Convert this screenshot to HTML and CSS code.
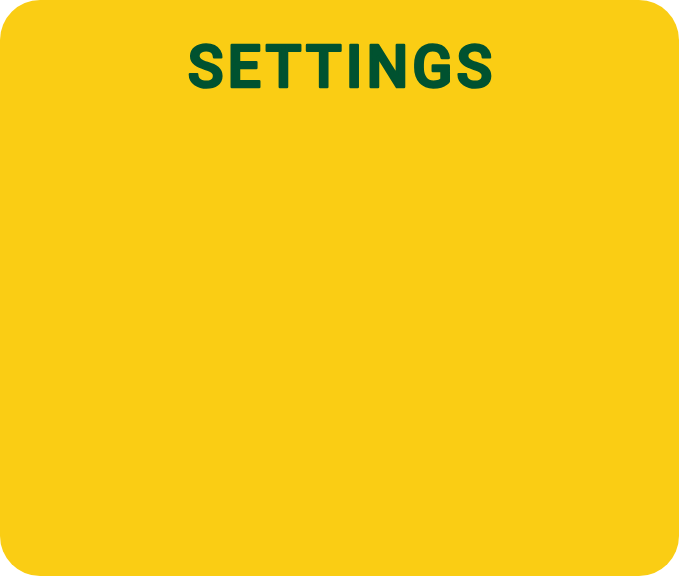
FILE: index.html
```html
<!DOCTYPE html>
<html lang="en">
<head>
<meta charset="utf-8">
<title>Settings</title>
<link rel="stylesheet" href="styles.css">
</head>
<body>
<main class="panel">
  <h1 class="panel-title">
    <svg class="title-svg" width="679" height="100" viewBox="0 0 679 100" role="img" aria-label="SETTINGS">
      <text class="title-text" x="342" y="87" text-anchor="middle">SETTINGS</text>
    </svg>
  </h1>
</main>
</body>
</html>
```
FILE: styles.css
```css
html, body {
  margin: 0;
  padding: 0;
  background: #ffffff;
  height: 100%;
}
.panel {
  box-sizing: border-box;
  width: 679px;
  height: 576px;
  background: #facd14;
  border-radius: 40px;
  display: flex;
  flex-direction: column;
  align-items: center;
}
.panel-title {
  margin: 0;
  line-height: 0;
}
.title-svg {
  display: block;
}
.title-text {
  font-family: Roboto, "Liberation Sans", sans-serif;
  font-weight: 500;
  font-size: 59px;
  letter-spacing: 4px;
  fill: #005230;
  stroke: #005230;
  stroke-width: 2.5px;
  stroke-linejoin: round;
  stroke-linecap: round;
}
```
